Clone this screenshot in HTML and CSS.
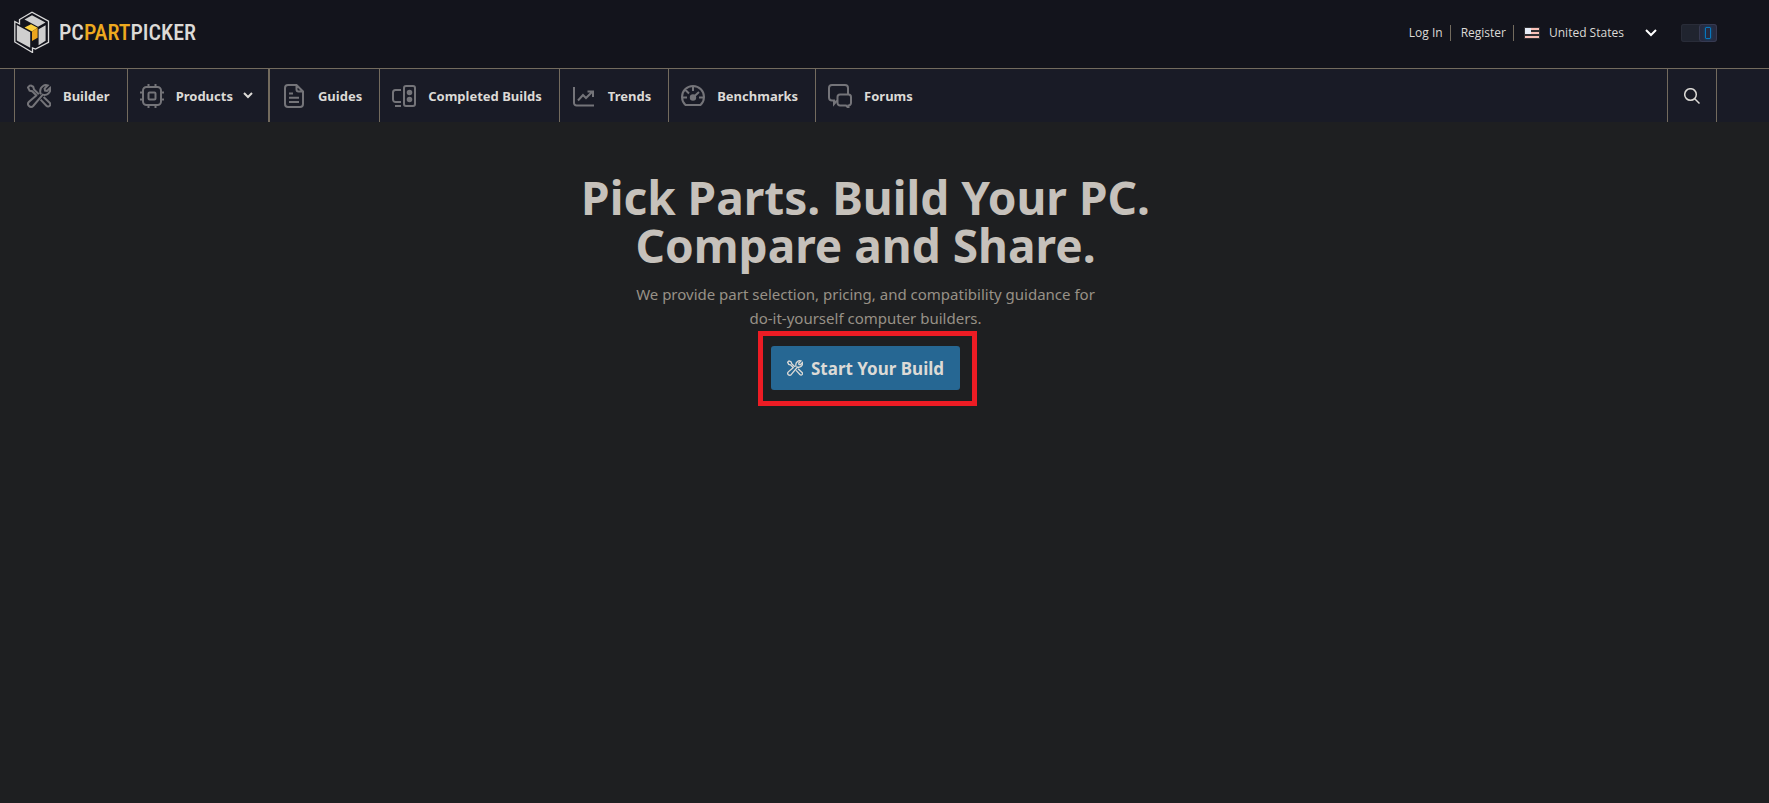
FILE: index.html
```html
<!DOCTYPE html>
<html lang="en">
<head>
<meta charset="utf-8">
<title>PCPartPicker</title>
<link rel="stylesheet" href="styles.css">
</head>
<body>
<svg class="sprite" aria-hidden="true">
  <symbol id="tools" viewBox="0 0 24 24">
    <path d="M3.2 1.2 1 3.4l1.6 3.2 2.6.6L10 12M3.2 1.2l3 1.6.8 2.6 4.8 4.8M14 10.2l-.6-1.2c-.6-3 .4-5.6 2.6-7 1.4-1 3.2-1.2 4.8-.6L17.6 4.6l.4 2 2 .4 3.2-3.2c.6 2-.2 4.2-1.8 5.6-1.6 1.4-3.6 1.8-5.6 1.2L6.2 22c-1.2 1.2-3 1.2-4.2 0s-1.200-3 0-4.200l7.600-6.600M13.600 15.600l5.800 6.200c1 1 2.400 1 3.200.1.900-.9.900-2.300 0-3.200L16.600 13"/>
  </symbol>
</svg>
<header>
  <div class="top">
    <a class="brand" href="#">
      <svg class="brand-mark" viewBox="0 0 36 42" aria-hidden="true">
        <path class="mark-line" d="M.8 10.5 5.5 13V8.500L18 1.200l16.500 9v21.200L21.500 38l-3-1v4.500L.8 31z"/>
        <path class="mark-face" d="M10.500 8.500 18 4.200l13.500 7.300-7.500 4.200zM2.800 14l13.400 7.300v15.500L2.800 29.400zM24.600 18.200l7-4v15.600l-7 4.400z"/>
        <path class="mark-top" d="m10.500 16.500 6.500-3.200 6.600 3.400-5.600 3.700z"/>
        <path class="mark-side" d="m18 20.400 5.600-3.700v10L18 30z"/>
      </svg>
      <span class="brand-name">PC<b>PART</b>PICKER</span>
    </a>
    <div class="account">
      <a href="#">Log In</a>
      <a href="#">Register</a>
      <div class="country">
        <svg class="flag" viewBox="0 0 16 12" aria-hidden="true">
          <path fill="#302f32" d="M0 0h16v12H0z"/>
          <path fill="#f9c1b8" d="M6 1h9v2H6zM6 5h9v2H6zM1 9h14v2H1z"/>
          <path fill="#e6ecf7" d="M1 1h6v6H1z"/>
        </svg>
        <select aria-label="Country"><option>United States</option></select>
        <svg class="chevron" viewBox="0 0 10 6" aria-hidden="true"><path d="m0 0 5 5 5-5"/></svg>
      </div>
      <label class="theme"><input type="checkbox" checked aria-label="Dark mode"><span class="knob"></span></label>
    </div>
  </div>
  <nav>
    <a href="#"><svg class="icon"><use href="#tools"/></svg>Builder</a>
    <a class="products" href="#"><svg class="icon" viewBox="0 0 24 24"><rect x="3" y="3" width="18" height="18" rx="3.5"/><rect x="8.5" y="8.5" width="7" height="7" rx="1"/><path d="M8.500 3V0M15.500 3V0M8.500 24v-3M15.500 24v-3M3 8.500H0M3 15.500H0M24 8.500h-3M24 15.500h-3"/></svg>Products<svg class="chevron" viewBox="0 0 10 6"><path d="m1 0 4 4 4-4"/></svg></a>
    <a href="#"><svg class="icon" viewBox="0 0 24 24"><path d="M14.500 1H6a3 3 0 0 0-3 3v16a3 3 0 0 0 3 3h12a3 3 0 0 0 3-3V7.500zM14.500 1v4.500a2 2 0 0 0 2 2H21M7 9.500h4M7 13.800h10M7 18h10"/></svg>Guides</a>
    <a href="#"><svg class="icon" viewBox="0 0 24 24"><rect x="12" y="2" width="11" height="20" rx="2"/><path d="M9 6H3.500A2.500 2.500 0 0 0 1 8.500v7A2.500 2.500 0 0 0 3.500 18H9M3 22h6"/><circle class="solid" cx="17.500" cy="8.500" r="1.800"/><circle class="solid" cx="17.500" cy="15.500" r="1.800"/></svg>Completed Builds</a>
    <a href="#"><svg class="icon" viewBox="0 0 24 24"><path d="M2 3v16a2.500 2.500 0 0 0 2.500 2.500H22M6 16.500 11 11l3 3 6.500-6.500M15.500 7.500H21V13"/></svg>Trends</a>
    <a href="#"><svg class="icon" viewBox="0 0 24 24"><path d="M4.500 21A11 11 0 1 1 19.500 21zM12 2v5M1 13.500h5M18 13.500h5M4.500 6 8 9.500M12 13.500 18 8"/><circle class="solid" cx="12" cy="13.500" r="2.200"/></svg>Benchmarks</a>
    <a href="#"><svg class="icon" viewBox="0 0 24 24"><path d="M9 16.500 6 20v-3.500H4a3 3 0 0 1-3-3V4a3 3 0 0 1 3-3h13a3 3 0 0 1 3 3v6.500"/><path d="M12 10.500h8.500A2.500 2.500 0 0 1 23 13v6a2.500 2.500 0 0 1-2.500 2.500V24L18 21.500h-6A2.500 2.500 0 0 1 9.500 19v-6a2.500 2.500 0 0 1 2.500-2.500z"/></svg>Forums</a>
    <button class="search" type="button" aria-label="Search"><svg viewBox="0 0 16 16"><circle cx="6.500" cy="6.500" r="5.800"/><path d="m10.500 10.500 5 5"/></svg></button>
  </nav>
</header>
<main>
  <h1>Pick Parts. Build Your PC.<br>Compare and Share.</h1>
  <p>We provide part selection, pricing, and compatibility guidance for<br>do-it-yourself computer builders.</p>
  <div class="highlight">
    <a class="start" href="#"><svg><use href="#tools"/></svg>Start Your Build</a>
  </div>
</main>
</body>
</html>
```
FILE: styles.css
```css
* { box-sizing: border-box; }

body {
  margin: 0;
  background: #1e1f21;
  color: #dcdad6;
  font-family: "Noto Sans", "Open Sans", sans-serif;
}

a { color: inherit; text-decoration: none; }
svg { fill: none; stroke: currentColor; flex: none; }
.sprite { display: none; }

.top {
  display: flex;
  justify-content: space-between;
  align-items: center;
  height: 69px;
  padding: 0 52px 4px 14px;
  background: #13141c;
  border-bottom: 1px solid #736b5e;
}

.brand { display: flex; align-items: center; gap: 9px; }
.brand-mark { width: 36px; height: 42px; stroke: none; }
.mark-line { stroke: #d9d9d9; stroke-width: 1.3; }
.mark-face { fill: #cfcfcf; }
.mark-top { fill: #fcd03c; }
.mark-side { fill: #eba41c; }
.brand-name {
  font: 500 22px "Roboto Condensed", Roboto, sans-serif;
  color: #dcdad6;
}
.brand-name b { font-weight: 500; color: #eda91f; }

.account {
  display: flex;
  align-items: center;
  margin-top: 2px;
  font: 12px/16px "Open Sans", sans-serif;
}
.account > a { padding-right: 7px; margin-right: 10px; border-right: 1px solid #736b5e; }
.country { display: flex; align-items: center; }
.flag { width: 16px; height: 12px; stroke: none; }
.country select {
  appearance: none;
  width: 96px;
  margin-left: 9px;
  margin-right: 1px;
  padding: 0;
  border: 0;
  background: transparent;
  color: inherit;
  font: inherit;
}
.chevron { width: 10px; height: 6px; overflow: visible; stroke-width: 2; }
.country .chevron { color: #fff; }

.theme {
  display: flex;
  justify-content: flex-end;
  width: 36px;
  height: 18px;
  margin-left: 25px;
  border-radius: 3px;
  background: #20242f;
  box-shadow: inset 0 0 0 1px #292c38;
}
.theme input { appearance: none; width: 0; height: 0; margin: 0; }
.knob {
  display: flex;
  align-items: center;
  justify-content: center;
  width: 18px;
  height: 18px;
  border: 1px solid #373a51;
  border-radius: 3px;
  background: #272b40;
}
.knob::before {
  content: "";
  width: 4px;
  height: 10px;
  border: 1px solid #0877bd;
  border-radius: 1px;
  box-shadow: 0 0 3px #07568a;
}

nav {
  display: flex;
  height: 53px;
  padding: 0 52px 0 14px;
  background: #191b26;
}
nav a {
  display: flex;
  align-items: center;
  padding: 0 17px 0 12px;
  border-left: 1px solid #736b5e;
  font-size: 13px;
  font-weight: 700;
}
nav .products { padding-right: 15px; border-right: 1px solid #736b5e; }
.icon { width: 24px; height: 24px; margin-right: 12px; color: #747479; stroke-width: 2; }
.icon .solid { fill: currentColor; }
nav .chevron { margin-left: 10px; }
.search {
  display: flex;
  align-items: center;
  justify-content: center;
  width: 50px;
  margin-left: auto;
  padding: 0;
  border: 1px solid #736b5e;
  border-width: 0 1px;
  background: transparent;
  color: #dcdad6;
}
.search svg { width: 16px; height: 16px; stroke-width: 1.5; }

main {
  display: flex;
  flex-direction: column;
  align-items: center;
  padding: 51px 52px 40px 14px;
  text-align: center;
}
h1 { margin: 0; color: #c6c1bb; font-size: 46px; line-height: 48px; font-weight: 700; }
p { margin: 13px 0 0; color: #989187; font-size: 15px; line-height: 24px; }
.highlight { margin: 1px 0 0 4px; padding: 10px 12px 11px 8px; border: 5px solid #ed1c24; }
.start {
  display: flex;
  align-items: center;
  gap: 8px;
  height: 44px;
  padding: 0 16px;
  border-radius: 3px;
  background: #266793;
  font-size: 17px;
  font-weight: 700;
}
.start svg { width: 16px; height: 16px; stroke-width: 2; }
```
